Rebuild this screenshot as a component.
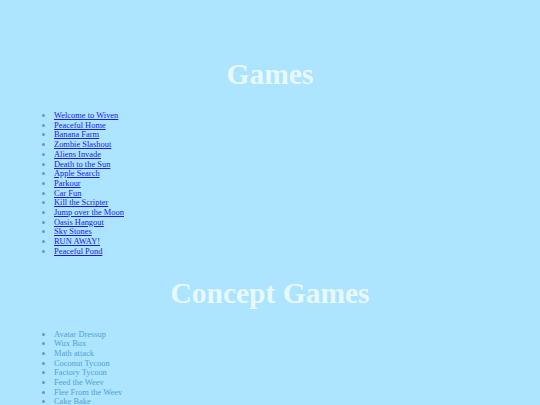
import React from "react";

const games = [
  "Welcome to Wiven",
  "Peaceful Home",
  "Banana Farm",
  "Zombie Slashout",
  "Aliens Invade",
  "Death to the Sun",
  "Apple Search",
  "Parkour",
  "Car Fun",
  "Kill the Scripter",
  "Jump over the Moon",
  "Oasis Hangout",
  "Sky Stones",
  "RUN AWAY!",
  "Peaceful Pond",
];

const concepts = [
  "Avatar Dressup",
  "Wux Bux",
  "Math attack",
  "Coconut Tycoon",
  "Factory Tycoon",
  "Feed the Weev",
  "Flee From the Weev",
  "Cake Bake",
];

export default function App() {
  return (
    <div
      className="min-h-[405px] w-full bg-[#ade4ff] text-[#4ea3d3]"
      style={{ fontFamily: '"Liberation Serif", "Times New Roman", serif' }}
    >
      <div className="pt-[57px]">
        <h1 className="text-center text-[29.5px] font-bold leading-[34px] text-[#e8f8ff]">
          Games
        </h1>
        <ul className="mt-[20px] list-disc pl-[54px] text-[8.44px] leading-[9.7px] marker:text-[#5a9fc9]">
          {games.map((g) => (
            <li key={g}>
              <a href="#" className="text-[#1a1aea] underline">
                {g}
              </a>
            </li>
          ))}
        </ul>
        <h1 className="mt-[19px] text-center text-[29.5px] font-bold leading-[34px] text-[#e8f8ff]">
          Concept Games
        </h1>
        <ul className="mt-[20px] list-disc pl-[54px] text-[8.44px] leading-[9.7px] marker:text-[#5a9fc9]">
          {concepts.map((g) => (
            <li key={g}>{g}</li>
          ))}
        </ul>
      </div>
    </div>
  );
}
